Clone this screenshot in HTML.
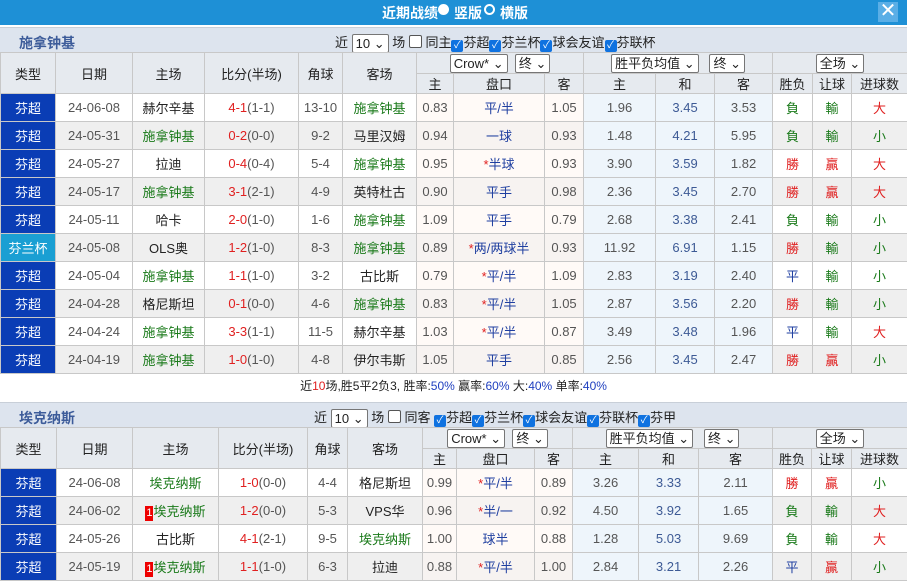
<!DOCTYPE html>
<html><head><meta charset="utf-8">
<style>
*{box-sizing:border-box;margin:0;padding:0}
body{width:907px;height:565px;overflow:hidden;background:#fff;font-family:"Liberation Sans","Noto Sans CJK SC",sans-serif;font-size:13px;color:#222;position:relative}
.top{position:absolute;left:0;top:0;width:907px;height:25px;background:#1e90d6;color:#fff;font-weight:bold;font-size:14px}
.top .t{position:absolute;left:382px;top:3px}
.top .r{position:absolute;top:4px;width:11px;height:11px;border-radius:50%;}
.close{position:absolute;left:878px;top:2px;width:20px;height:20px;background:#5aaee6;color:#fff;font-size:20px;line-height:19px;text-align:center;font-weight:normal}
.bar{position:absolute;left:0;width:907px;height:25px;background:#dde4ee;border-top:1px solid #c8cfd8}
.bar .name{position:absolute;left:19px;top:5px;color:#3d5c9a;font-weight:bold;font-size:14px}
.bar .opts{position:absolute;top:4px;font-size:13px;color:#222;white-space:nowrap}
.sel{display:inline-block;border:1px solid #767676;border-radius:2px;background:#fff;height:19px;line-height:17px;padding:0 3px;font-size:13px;vertical-align:middle;color:#222}
.cb{display:inline-block;width:12px;height:12px;border-radius:2px;vertical-align:-1px;}
.cb.on{background:#0f72e0;color:#fff;font-size:10px;line-height:12px;text-align:center}
.cb.off{border:1px solid #555;background:#fff;width:13px;height:13px}
table{position:absolute;left:0;border-collapse:collapse;table-layout:fixed;width:907px}
td{border:1px solid #c8c8c8;text-align:center;white-space:nowrap;overflow:hidden;padding:0}
tr.h td{background:#e6eaef;color:#222}
tr.d td{height:28px;background:#fff}
tr.d.g td{background:#efefef}
tr.d td.o{background:#eef5fb}
tr.d td.p{background:#fffaf7}
tr.d.g td.p{background:#f7f3f1}
td.ty{background:#0a3db5!important;color:#fff}
td.ty2{background:#1a9fd3!important;color:#fff}
.gr{color:#1a7a1a}.rd{color:#e02020}.bl{color:#1f3fa0}.hb{color:#3d5a95}.dk{color:#555}
.one{display:inline-block;background:#e00;color:#fff;font-size:11px;width:8px;height:15px;line-height:15px;vertical-align:0}
.sum{position:absolute;left:0;top:373px;width:907px;height:28px;text-align:center;line-height:27px;font-size:12px}
.sum b{font-weight:normal;color:#1f3fbf}
</style></head><body>
<div class="top"><span class="t">近期战绩</span><span class="r" style="left:438px;background:#fff"></span><span style="position:absolute;left:454px;top:3px">竖版</span><span class="r" style="left:484px;border:2px solid #fff"></span><span style="position:absolute;left:500px;top:3px">横版</span><div class="close">✕</div></div>

<div class="bar" style="top:27px"><span class="name">施拿钟基</span>
<span class="opts" style="left:335px">近 <span class="sel">10 ⌄</span> 场 <span class="cb off"></span> 同主<span class="cb on">✓</span>芬超<span class="cb on">✓</span>芬兰杯<span class="cb on">✓</span>球会友谊<span class="cb on">✓</span>芬联杯</span></div>

<table style="top:52px">
<colgroup><col style="width:55px"><col style="width:77px"><col style="width:72px"><col style="width:94px"><col style="width:44px"><col style="width:74px"><col style="width:37px"><col style="width:91px"><col style="width:39px"><col style="width:72px"><col style="width:59px"><col style="width:58px"><col style="width:40px"><col style="width:39px"><col style="width:56px"></colgroup>
<tr class="h" style="height:21px"><td rowspan="2">类型</td><td rowspan="2">日期</td><td rowspan="2">主场</td><td rowspan="2">比分(半场)</td><td rowspan="2">角球</td><td rowspan="2">客场</td><td colspan="3"><span class="sel">Crow* ⌄</span> &nbsp;<span class="sel">终 ⌄</span></td><td colspan="3"><span class="sel">胜平负均值 ⌄</span> &nbsp;&nbsp;<span class="sel">终 ⌄</span></td><td colspan="3"><span class="sel">全场 ⌄</span></td></tr>
<tr class="h" style="height:20px"><td>主</td><td>盘口</td><td>客</td><td>主</td><td>和</td><td>客</td><td>胜负</td><td>让球</td><td>进球数</td></tr>
<tr class="d"><td class="ty">芬超</td><td class="dk">24-06-08</td><td>赫尔辛基</td><td><span class="rd">4-1</span><span class="dk">(1-1)</span></td><td class="dk">13-10</td><td class="gr">施拿钟基</td><td class="p dk">0.83</td><td class="p bl">平/半</td><td class="p dk">1.05</td><td class="o dk">1.96</td><td class="o hb">3.45</td><td class="o dk">3.53</td><td class="gr">負</td><td class="gr">輸</td><td class="rd">大</td></tr>
<tr class="d g"><td class="ty">芬超</td><td class="dk">24-05-31</td><td class="gr">施拿钟基</td><td><span class="rd">0-2</span><span class="dk">(0-0)</span></td><td class="dk">9-2</td><td>马里汉姆</td><td class="p dk">0.94</td><td class="p bl">一球</td><td class="p dk">0.93</td><td class="o dk">1.48</td><td class="o hb">4.21</td><td class="o dk">5.95</td><td class="gr">負</td><td class="gr">輸</td><td class="gr">小</td></tr>
<tr class="d"><td class="ty">芬超</td><td class="dk">24-05-27</td><td>拉迪</td><td><span class="rd">0-4</span><span class="dk">(0-4)</span></td><td class="dk">5-4</td><td class="gr">施拿钟基</td><td class="p dk">0.95</td><td class="p bl"><span class="rd">*</span>半球</td><td class="p dk">0.93</td><td class="o dk">3.90</td><td class="o hb">3.59</td><td class="o dk">1.82</td><td class="rd">勝</td><td class="rd">贏</td><td class="rd">大</td></tr>
<tr class="d g"><td class="ty">芬超</td><td class="dk">24-05-17</td><td class="gr">施拿钟基</td><td><span class="rd">3-1</span><span class="dk">(2-1)</span></td><td class="dk">4-9</td><td>英特杜古</td><td class="p dk">0.90</td><td class="p bl">平手</td><td class="p dk">0.98</td><td class="o dk">2.36</td><td class="o hb">3.45</td><td class="o dk">2.70</td><td class="rd">勝</td><td class="rd">贏</td><td class="rd">大</td></tr>
<tr class="d"><td class="ty">芬超</td><td class="dk">24-05-11</td><td>哈卡</td><td><span class="rd">2-0</span><span class="dk">(1-0)</span></td><td class="dk">1-6</td><td class="gr">施拿钟基</td><td class="p dk">1.09</td><td class="p bl">平手</td><td class="p dk">0.79</td><td class="o dk">2.68</td><td class="o hb">3.38</td><td class="o dk">2.41</td><td class="gr">負</td><td class="gr">輸</td><td class="gr">小</td></tr>
<tr class="d g"><td class="ty2">芬兰杯</td><td class="dk">24-05-08</td><td>OLS奥</td><td><span class="rd">1-2</span><span class="dk">(1-0)</span></td><td class="dk">8-3</td><td class="gr">施拿钟基</td><td class="p dk">0.89</td><td class="p bl"><span class="rd">*</span>两/两球半</td><td class="p dk">0.93</td><td class="o dk">11.92</td><td class="o hb">6.91</td><td class="o dk">1.15</td><td class="rd">勝</td><td class="gr">輸</td><td class="gr">小</td></tr>
<tr class="d"><td class="ty">芬超</td><td class="dk">24-05-04</td><td class="gr">施拿钟基</td><td><span class="rd">1-1</span><span class="dk">(1-0)</span></td><td class="dk">3-2</td><td>古比斯</td><td class="p dk">0.79</td><td class="p bl"><span class="rd">*</span>平/半</td><td class="p dk">1.09</td><td class="o dk">2.83</td><td class="o hb">3.19</td><td class="o dk">2.40</td><td class="bl">平</td><td class="gr">輸</td><td class="gr">小</td></tr>
<tr class="d g"><td class="ty">芬超</td><td class="dk">24-04-28</td><td>格尼斯坦</td><td><span class="rd">0-1</span><span class="dk">(0-0)</span></td><td class="dk">4-6</td><td class="gr">施拿钟基</td><td class="p dk">0.83</td><td class="p bl"><span class="rd">*</span>平/半</td><td class="p dk">1.05</td><td class="o dk">2.87</td><td class="o hb">3.56</td><td class="o dk">2.20</td><td class="rd">勝</td><td class="gr">輸</td><td class="gr">小</td></tr>
<tr class="d"><td class="ty">芬超</td><td class="dk">24-04-24</td><td class="gr">施拿钟基</td><td><span class="rd">3-3</span><span class="dk">(1-1)</span></td><td class="dk">11-5</td><td>赫尔辛基</td><td class="p dk">1.03</td><td class="p bl"><span class="rd">*</span>平/半</td><td class="p dk">0.87</td><td class="o dk">3.49</td><td class="o hb">3.48</td><td class="o dk">1.96</td><td class="bl">平</td><td class="gr">輸</td><td class="rd">大</td></tr>
<tr class="d g"><td class="ty">芬超</td><td class="dk">24-04-19</td><td class="gr">施拿钟基</td><td><span class="rd">1-0</span><span class="dk">(1-0)</span></td><td class="dk">4-8</td><td>伊尔韦斯</td><td class="p dk">1.05</td><td class="p bl">平手</td><td class="p dk">0.85</td><td class="o dk">2.56</td><td class="o hb">3.45</td><td class="o dk">2.47</td><td class="rd">勝</td><td class="rd">贏</td><td class="gr">小</td></tr>
</table>

<div class="sum">近<span class="rd">10</span>场,胜5平2负3, 胜率:<b>50%</b> 赢率:<b>60%</b> 大:<b>40%</b> 单率:<b>40%</b></div>

<div class="bar" style="top:402px"><span class="name">埃克纳斯</span>
<span class="opts" style="left:314px">近 <span class="sel">10 ⌄</span> 场 <span class="cb off"></span> 同客 <span class="cb on">✓</span>芬超<span class="cb on">✓</span>芬兰杯<span class="cb on">✓</span>球会友谊<span class="cb on">✓</span>芬联杯<span class="cb on">✓</span>芬甲</span></div>

<table style="top:427px">
<colgroup><col style="width:56px"><col style="width:76px"><col style="width:86px"><col style="width:89px"><col style="width:40px"><col style="width:75px"><col style="width:34px"><col style="width:78px"><col style="width:38px"><col style="width:66px"><col style="width:60px"><col style="width:74px"><col style="width:39px"><col style="width:40px"><col style="width:56px"></colgroup>
<tr class="h" style="height:21px"><td rowspan="2">类型</td><td rowspan="2">日期</td><td rowspan="2">主场</td><td rowspan="2">比分(半场)</td><td rowspan="2">角球</td><td rowspan="2">客场</td><td colspan="3"><span class="sel">Crow* ⌄</span> &nbsp;<span class="sel">终 ⌄</span></td><td colspan="3"><span class="sel">胜平负均值 ⌄</span> &nbsp;&nbsp;<span class="sel">终 ⌄</span></td><td colspan="3"><span class="sel">全场 ⌄</span></td></tr>
<tr class="h" style="height:19px"><td>主</td><td>盘口</td><td>客</td><td>主</td><td>和</td><td>客</td><td>胜负</td><td>让球</td><td>进球数</td></tr>
<tr class="d"><td class="ty">芬超</td><td class="dk">24-06-08</td><td class="gr">埃克纳斯</td><td><span class="rd">1-0</span><span class="dk">(0-0)</span></td><td class="dk">4-4</td><td>格尼斯坦</td><td class="p dk">0.99</td><td class="p bl"><span class="rd">*</span>平/半</td><td class="p dk">0.89</td><td class="o dk">3.26</td><td class="o hb">3.33</td><td class="o dk">2.11</td><td class="rd">勝</td><td class="rd">贏</td><td class="gr">小</td></tr>
<tr class="d g"><td class="ty">芬超</td><td class="dk">24-06-02</td><td class="gr"><span class="one">1</span>埃克纳斯</td><td><span class="rd">1-2</span><span class="dk">(0-0)</span></td><td class="dk">5-3</td><td>VPS华</td><td class="p dk">0.96</td><td class="p bl"><span class="rd">*</span>半/一</td><td class="p dk">0.92</td><td class="o dk">4.50</td><td class="o hb">3.92</td><td class="o dk">1.65</td><td class="gr">負</td><td class="gr">輸</td><td class="rd">大</td></tr>
<tr class="d"><td class="ty">芬超</td><td class="dk">24-05-26</td><td>古比斯</td><td><span class="rd">4-1</span><span class="dk">(2-1)</span></td><td class="dk">9-5</td><td class="gr">埃克纳斯</td><td class="p dk">1.00</td><td class="p bl">球半</td><td class="p dk">0.88</td><td class="o dk">1.28</td><td class="o hb">5.03</td><td class="o dk">9.69</td><td class="gr">負</td><td class="gr">輸</td><td class="rd">大</td></tr>
<tr class="d g"><td class="ty">芬超</td><td class="dk">24-05-19</td><td class="gr"><span class="one">1</span>埃克纳斯</td><td><span class="rd">1-1</span><span class="dk">(1-0)</span></td><td class="dk">6-3</td><td>拉迪</td><td class="p dk">0.88</td><td class="p bl"><span class="rd">*</span>平/半</td><td class="p dk">1.00</td><td class="o dk">2.84</td><td class="o hb">3.21</td><td class="o dk">2.26</td><td class="bl">平</td><td class="rd">贏</td><td class="gr">小</td></tr>
</table>
</body></html>
